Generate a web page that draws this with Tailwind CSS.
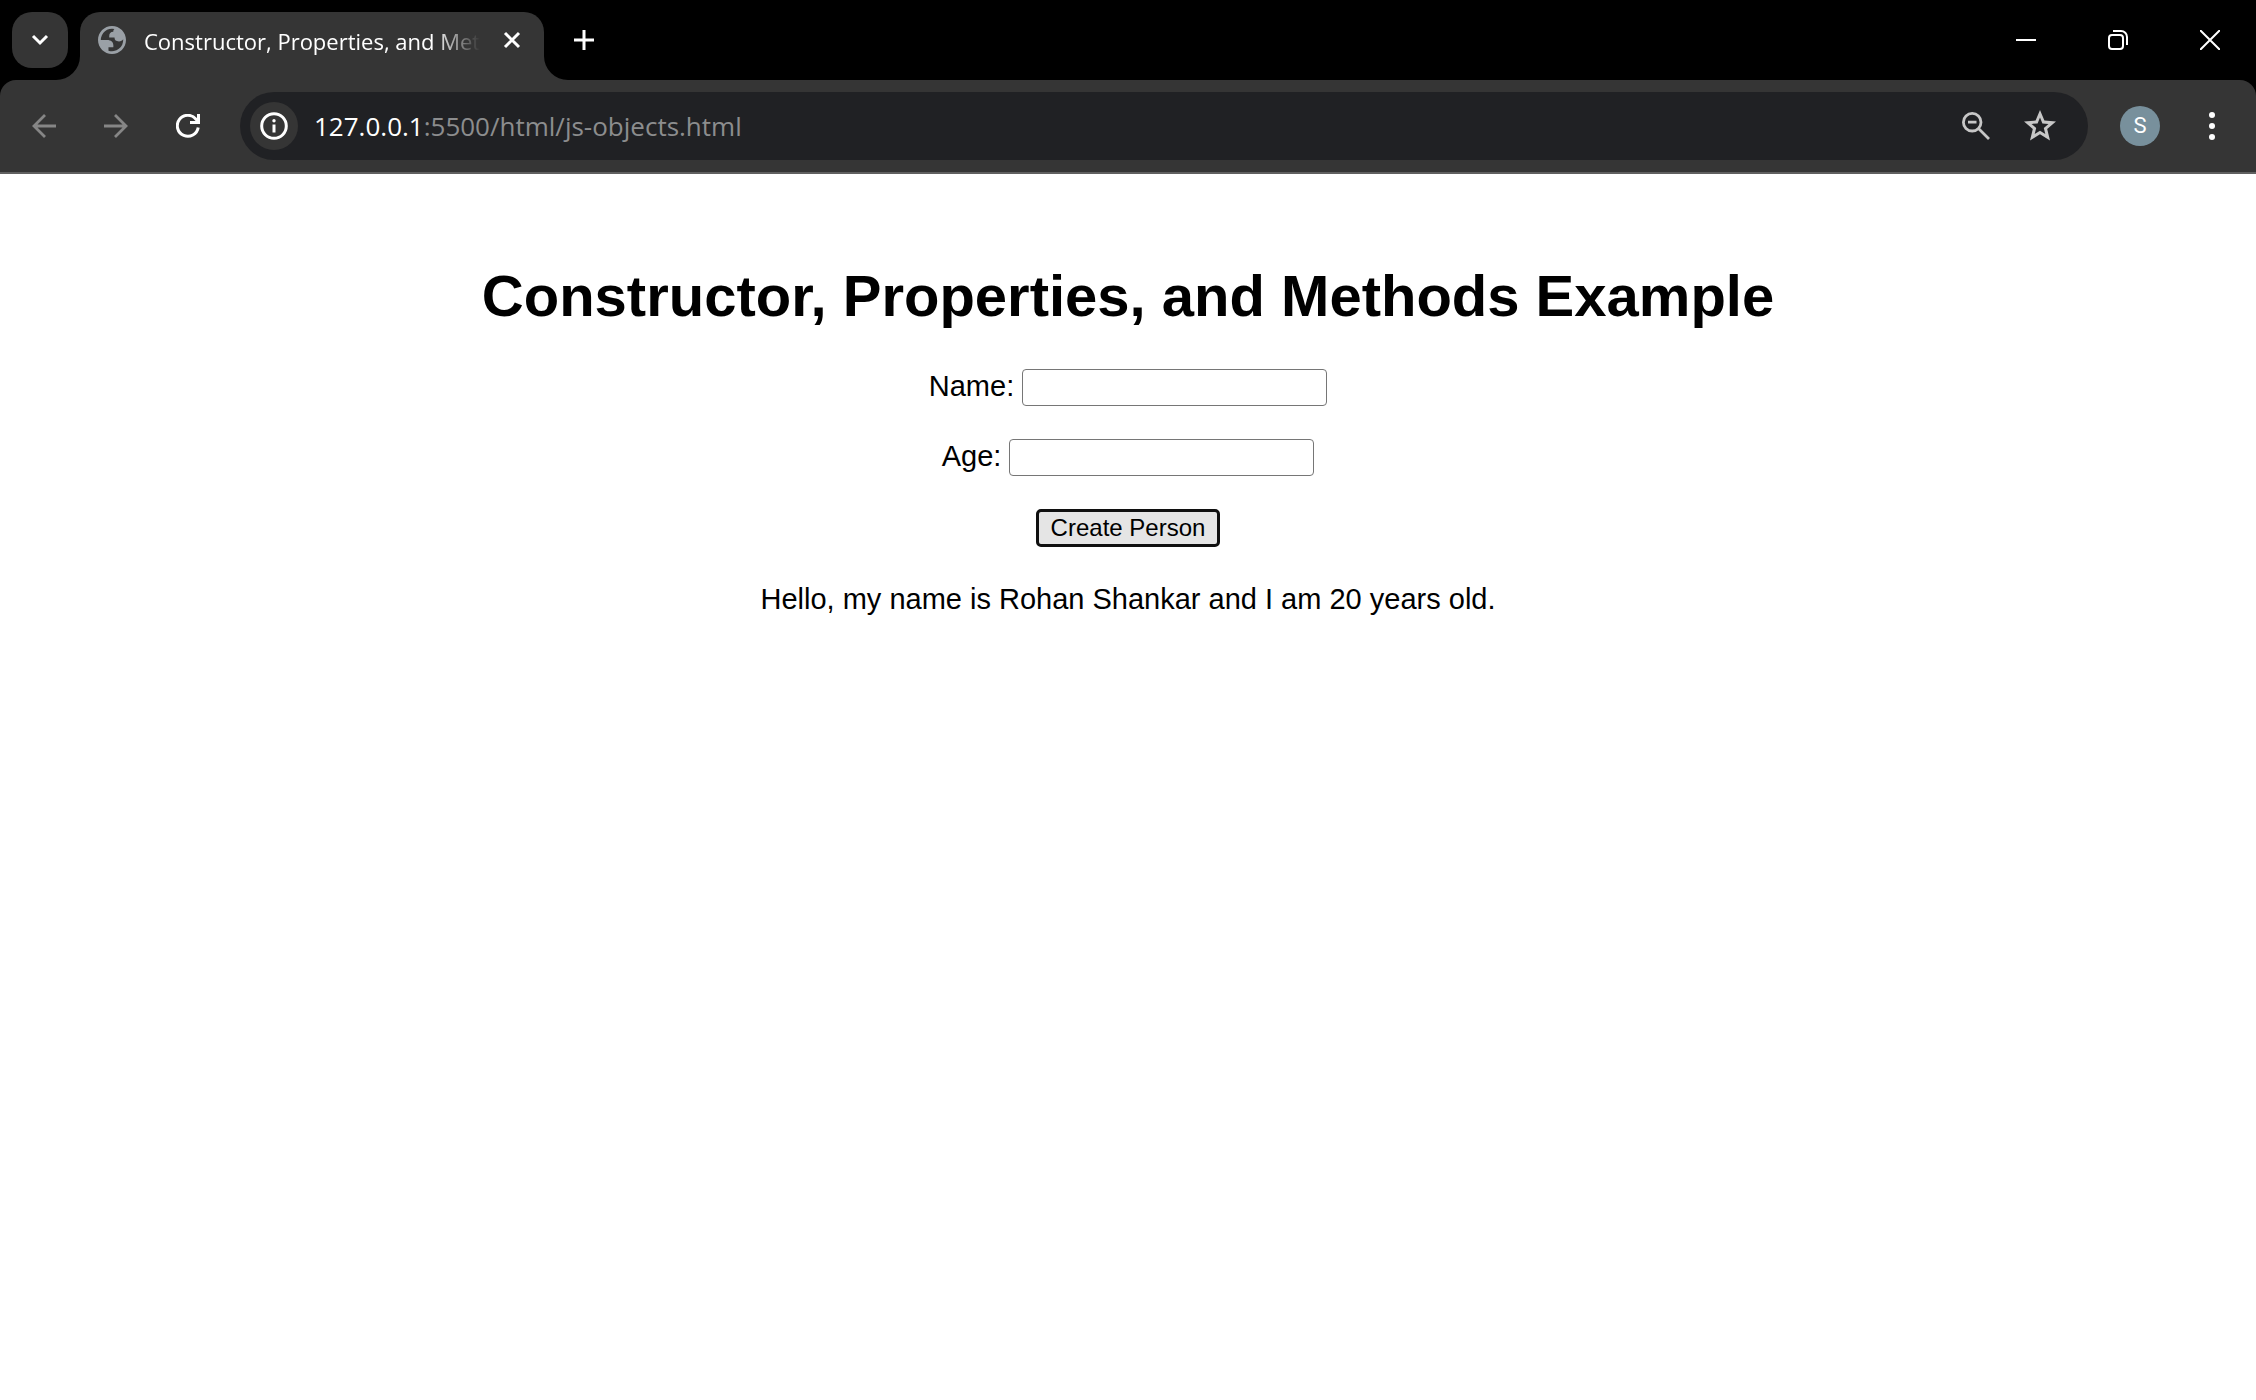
<!DOCTYPE html>
<html lang="en">
<head>
<meta charset="utf-8">
<title>Constructor, Properties, and Methods Example</title>
<script src="https://cdn.jsdelivr.net/npm/@tailwindcss/browser@4"></script>
</head>
<body class="flex min-h-screen flex-col bg-white font-['Liberation_Sans',sans-serif] text-black">
<header class="bg-black font-['Open_Sans',sans-serif] text-white">
  <!-- Tab strip -->
  <div class="flex h-20 items-start">
    <button aria-label="Search tabs" class="m-3 flex size-14 shrink-0 items-center justify-center rounded-[20px] bg-[#353535]">
      <svg width="20" height="14" viewBox="0 0 20 14" fill="none" stroke="#fff" stroke-width="3"><path d="M3 3l7 7 7-7"/></svg>
    </button>
    <div class="relative mt-3 flex h-[68px] w-[464px] items-start rounded-t-[20px] bg-[#353535] pr-5 pl-[18px]">
      <svg class="absolute bottom-0 -left-6" width="24" height="24" viewBox="0 0 24 24" fill="#353535"><path d="M24 0V24H0A24 24 0 0 0 24 0z"/></svg>
      <svg class="absolute -right-6 bottom-0" width="24" height="24" viewBox="0 0 24 24" fill="#353535"><path d="M0 0V24H24A24 24 0 0 1 0 0z"/></svg>
      <svg class="mt-[14px] shrink-0" width="28" height="28" viewBox="2 2 20 20" fill="#9aa0a6" fill-rule="evenodd"><path d="M12 2C6.480 2 2 6.480 2 12s4.480 10 10 10 10-4.480 10-10S17.520 2 12 2zM4 12h4.400c3.407.022 4.922 1.730 4.543 5.127H9.488v2.470a8.004 8.004 0 0 0 10.498-8.083C19.327 12.504 18.332 13 17 13c-2.137 0-3.206-.916-3.206-2.750h-3.748c-.274-2.728.683-4.092 2.870-4.092 0-.975.327-1.597.811-1.970A8.004 8.004 0 0 0 4 12z"/></svg>
      <span class="mt-[13px] ml-[18px] min-w-0 flex-1 overflow-hidden text-[22px] leading-8 whitespace-nowrap [mask-image:linear-gradient(to_right,#000_86%,transparent)]">Constructor, Properties, and Methods Example</span>
      <button aria-label="Close tab" class="mt-4 ml-5 flex size-6 items-center justify-center"><svg width="18" height="18" viewBox="0 0 18 18" stroke="#fff" stroke-width="3"><path d="M2 2l14 14M16 2L2 16"/></svg></button>
    </div>
    <button aria-label="New tab" class="mt-3 ml-3 flex size-14 items-center justify-center"><svg width="20" height="20" viewBox="0 0 20 20" stroke="#fff" stroke-width="3"><path d="M0 10h20M10 0v20"/></svg></button>
    <div class="ml-auto flex h-20">
      <button aria-label="Minimize" class="flex w-[92px] items-center justify-center"><svg width="20" height="20" viewBox="0 0 20 20" stroke="#fff" stroke-width="2"><path d="M0 10h20"/></svg></button>
      <button aria-label="Restore" class="flex w-[92px] items-center justify-center"><svg width="20" height="20" viewBox="0 0 20 20" fill="none" stroke="#fff" stroke-width="2"><rect x="1" y="5" width="14" height="14" rx="3"/><path d="M5 1h8a6 6 0 0 1 6 6v8"/></svg></button>
      <button aria-label="Close" class="flex w-[92px] items-center justify-center"><svg width="20" height="20" viewBox="0 0 20 20" stroke="#fff" stroke-width="2"><path d="M0 0l20 20M20 0L0 20"/></svg></button>
    </div>
  </div>
  <!-- Toolbar -->
  <div class="flex h-[94px] items-center gap-4 rounded-t-[16px] border-b-2 border-[#606060] bg-[#353535] px-4">
    <button aria-label="Back" class="flex size-14 shrink-0 items-center justify-center"><svg width="24" height="24" viewBox="0 0 24 24" fill="none" stroke="#868686" stroke-width="2.800"><path d="M24 12H2M13 1L2 12l11 11"/></svg></button>
    <button aria-label="Forward" class="flex size-14 shrink-0 items-center justify-center"><svg width="24" height="24" viewBox="0 0 24 24" fill="none" stroke="#868686" stroke-width="2.800"><path d="M0 12h22M11 1l11 11-11 11"/></svg></button>
    <button aria-label="Reload" class="flex size-14 shrink-0 items-center justify-center"><svg width="24" height="24" viewBox="0 0 24 24" fill="none" stroke="#fff" stroke-width="3"><path d="M22.200 13.500A10.500 10.500 0 1 1 20 5.200L22 8M22.500 0v8.500H14"/></svg></button>
    <div class="mx-2 flex h-[68px] min-w-0 flex-1 items-center rounded-full bg-[#202124] pr-6 pl-[10px]">
      <button aria-label="View site information" class="flex size-12 shrink-0 items-center justify-center rounded-full bg-[#353535]"><svg width="28" height="28" viewBox="0 0 28 28" fill="none"><circle cx="14" cy="14" r="12.300" stroke="#fff" stroke-width="3"/><path d="M14 12.500V20.500" stroke="#fff" stroke-width="3"/><circle cx="14" cy="8.700" r="1.700" fill="#fff"/></svg></button>
      <div role="textbox" aria-label="Address" tabindex="0" class="ml-4 min-w-0 flex-1 text-[26px] leading-9 whitespace-nowrap text-[#8c8d8e]"><span class="text-white">127.0.0.1</span>:5500/html/js-objects.html</div>
      <button aria-label="Zoom" class="mr-4 flex size-12 items-center justify-center"><svg width="28" height="28" viewBox="0 0 28 28" fill="none" stroke="#c7c7c7" stroke-width="2.800"><circle cx="10.200" cy="10.200" r="8.800"/><path d="M16.500 16.500L27 27M6 10.200h8.500"/></svg></button>
      <button aria-label="Bookmark this tab" class="flex size-12 items-center justify-center"><svg width="32" height="32" viewBox="0 0 32 32" fill="#c7c7c7" fill-rule="evenodd"><path d="M16 0l4.400 10.600L32 11.500l-8.800 7.600L26 30.500l-10-6.200L6 30.500l2.800-11.400L0 11.500l11.600-.9zM16 7.600l-2.400 5.800-6.100.5 4.700 4-1.500 6L16 20.700l5.300 3.200-1.500-6 4.700-4-6.100-.5z"/></svg></button>
    </div>
    <button aria-label="Profile" class="flex size-14 shrink-0 items-center justify-center"><span class="flex size-10 items-center justify-center rounded-full bg-[#78909c] font-['Roboto',sans-serif] text-[22px] leading-6">S</span></button>
    <button aria-label="Menu" class="flex size-14 shrink-0 items-center justify-center"><svg width="6" height="28" viewBox="0 0 6 28" fill="#fff"><circle cx="3" cy="3" r="3"/><circle cx="3" cy="14" r="3"/><circle cx="3" cy="25" r="3"/></svg></button>
  </div>
</header>
<main class="flex flex-col items-center pt-[89px] text-center text-[29px] leading-[34px]">
  <h1 class="text-[58px] leading-[66px] font-bold">Constructor, Properties, and Methods Example</h1>
  <form class="mt-10 flex flex-col items-center gap-[33px]" onsubmit="return false">
    <div class="flex gap-2"><label for="name">Name:</label><input id="name" type="text" class="h-[37px] w-[305px] rounded-[4px] border border-[#767676] px-1 text-2xl"></div>
    <div class="flex gap-2"><label for="age">Age:</label><input id="age" type="text" class="h-[37px] w-[305px] rounded-[4px] border border-[#767676] px-1 text-2xl"></div>
    <button type="submit" class="h-[38px] rounded-[5px] border-3 border-[#101010] bg-[#e5e5e5] px-3 text-2xl leading-8">Create Person</button>
  </form>
  <p class="mt-[35px]">Hello, my name is Rohan Shankar and I am 20 years old.</p>
</main>
</body>
</html>
